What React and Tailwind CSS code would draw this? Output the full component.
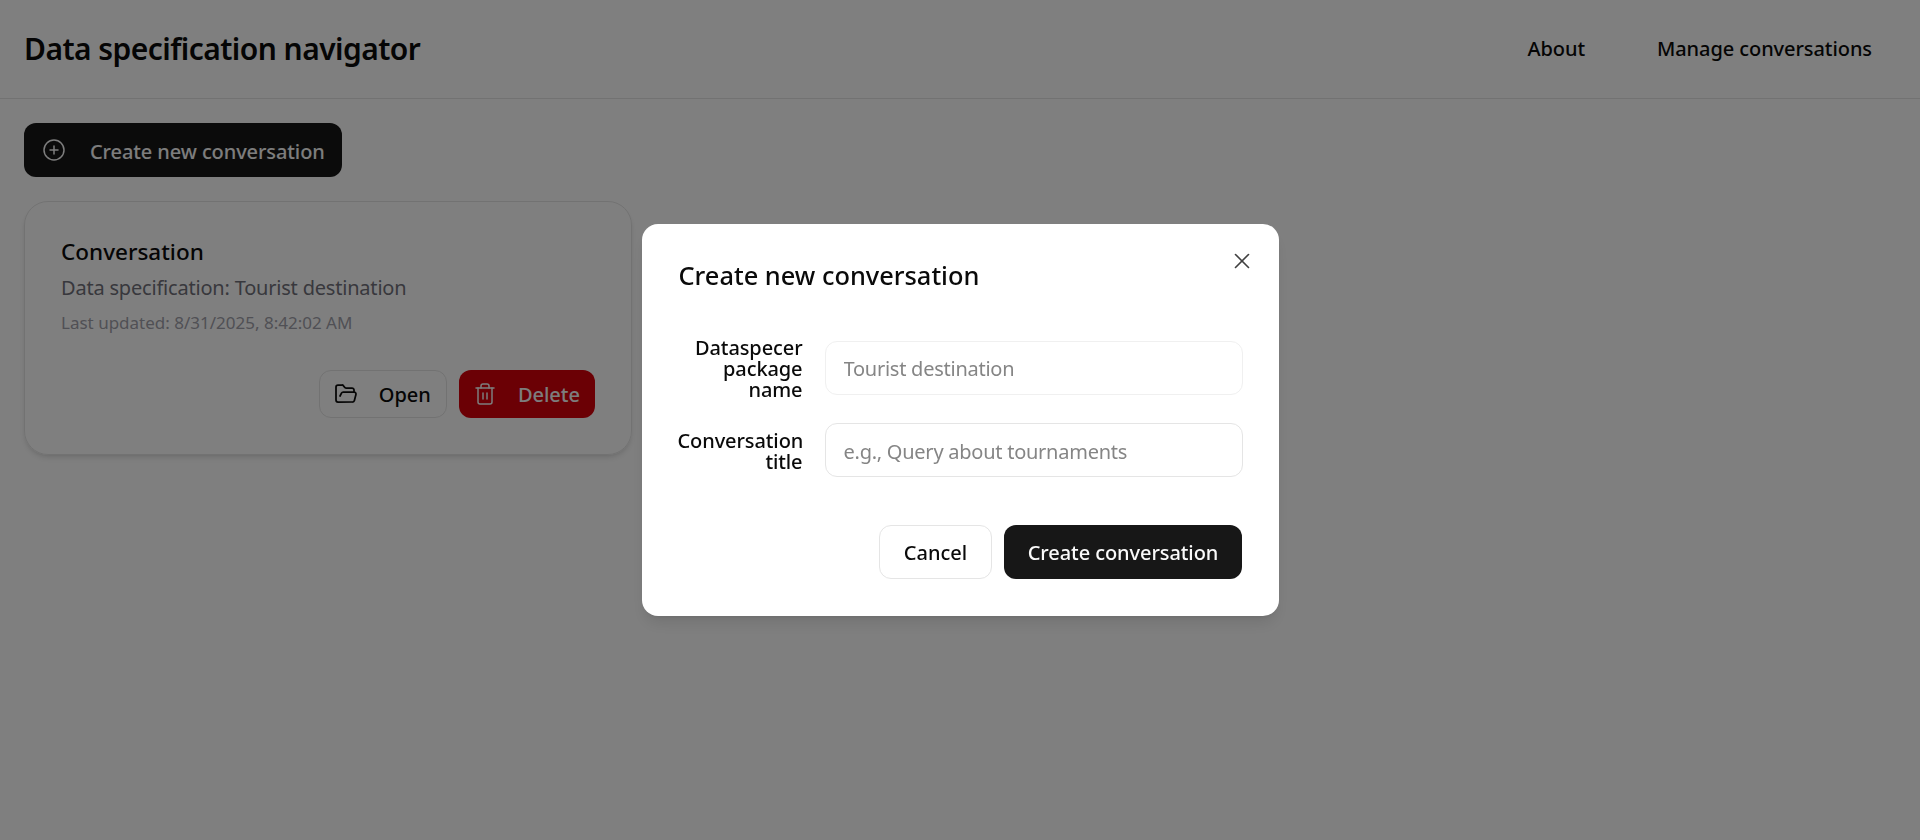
import React from "react";
import { CirclePlus, FolderOpen, Trash2, X } from "lucide-react";

const App = () => {
  return (
    <div className="min-h-screen bg-white font-['Noto_Sans',sans-serif] text-[#0a0a0a]">
      {/* Header */}
      <header className="flex h-[99px] items-center justify-between border-b border-[#e5e5e5] pl-6 pr-12">
        <h1 className="pb-[2px] text-[30px] font-semibold tracking-[-0.55px]">Data specification navigator</h1>
        <nav className="flex items-center gap-[72px] text-xl font-medium tracking-[-0.08px]">
          <a>About</a>
          <a>Manage conversations</a>
        </nav>
      </header>

      <main className="flex flex-col items-start gap-6 p-6">
        <button className="flex h-[54px] items-center gap-[24px] rounded-xl bg-[#171717] pl-[18px] pr-[17px] text-xl font-medium tracking-[-0.1px] text-[#fafafa]">
          <CirclePlus size={24} strokeWidth={1.5} />
          <span className="pt-[3px]">Create new conversation</span>
        </button>

        {/* Conversation card */}
        <div className="flex w-[608px] flex-col rounded-3xl border border-[#e5e5e5] p-9 shadow-md">
          <h2 className="text-[22.5px] font-medium leading-7">Conversation</h2>
          <p className="mt-2 text-xl leading-7 tracking-[-0.2px] text-[#71717a]">Data specification: Tourist destination</p>
          <p className="mt-[9px] text-[17px] leading-6 text-[#a1a1aa]">Last updated: 8/31/2025, 8:42:02 AM</p>
          <div className="mt-[35px] flex justify-end gap-3">
            <button className="flex h-12 items-center gap-[21px] rounded-xl border border-[#e5e5e5] pl-[14px] pr-[15px] text-xl font-medium">
              <FolderOpen size={24} strokeWidth={1.75} />
              <span className="pt-[2px]">Open</span>
            </button>
            <button className="flex h-12 items-center gap-[21px] rounded-xl bg-[#d6000a] pl-[14px] pr-[15px] text-xl font-medium text-[#fafafa]">
              <Trash2 size={24} strokeWidth={1.5} />
              <span className="pt-[2px]">Delete</span>
            </button>
          </div>
        </div>
      </main>

      {/* Dialog */}
      <div className="fixed inset-0 flex items-center justify-center bg-black/50">
        <div className="relative w-[637px] rounded-2xl bg-white p-9 shadow-lg">
          <button className="absolute right-6 top-6 text-[#404040]">
            <X size={26} strokeWidth={1.5} />
          </button>
          <h2 className="pl-px text-[25.4px] font-medium leading-[30px]">Create new conversation</h2>

          <div className="mt-[46px] flex flex-col gap-6">
            <div className="flex items-center gap-[22px]">
              <label className="w-[125px] translate-y-px text-right text-xl font-medium leading-[21px] tracking-[-0.1px]">Dataspecer package name</label>
              <input
                className="h-[54px] flex-1 rounded-xl border border-[#f0f0f0] px-[18px] pt-[2px] text-xl tracking-[-0.25px] placeholder:text-[#858585]"
                placeholder="Tourist destination"
              />
            </div>
            <div className="flex items-center gap-[22px]">
              <label className="w-[125px] translate-y-px text-right text-xl font-medium leading-[21px] tracking-[-0.1px]">Conversation title</label>
              <input
                className="h-[54px] flex-1 rounded-xl border border-[#e5e5e5] px-[18px] pt-[2px] text-xl tracking-[-0.25px] placeholder:text-[#858585]"
                placeholder="e.g., Query about tournaments"
              />
            </div>
          </div>

          <div className="mb-px mr-px mt-12 flex justify-end gap-3">
            <button className="h-[54px] w-[113px] rounded-xl border border-[#e5e5e5] pl-px pt-[2px] text-xl font-medium">Cancel</button>
            <button className="h-[54px] w-[238px] rounded-xl bg-[#171717] pl-px pt-[2px] text-xl font-medium tracking-[-0.08px] text-[#fafafa]">Create conversation</button>
          </div>
        </div>
      </div>
    </div>
  );
};

export default App;
